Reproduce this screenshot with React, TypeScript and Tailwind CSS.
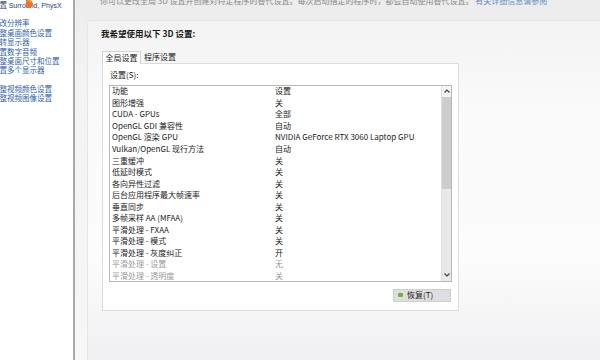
import React from 'react';

const sideLinks = [
  '更改分辨率',
  '调整桌面颜色设置',
  '旋转显示器',
  '设置数字音频',
  '调整桌面尺寸和位置',
  '设置多个显示器',
];

const videoLinks = ['调整视频颜色设置', '调整视频图像设置'];

const rows: { name: string; value: string; dim?: boolean }[] = [
  { name: '图形增强', value: '关' },
  { name: 'CUDA - GPUs', value: '全部' },
  { name: 'OpenGL GDI 兼容性', value: '自动' },
  { name: 'OpenGL 渲染 GPU', value: 'NVIDIA GeForce RTX 3060 Laptop GPU' },
  { name: 'Vulkan/OpenGL 现行方法', value: '自动' },
  { name: '三重缓冲', value: '关' },
  { name: '低延时模式', value: '关' },
  { name: '各向异性过滤', value: '关' },
  { name: '后台应用程序最大帧速率', value: '关' },
  { name: '垂直同步', value: '关' },
  { name: '多帧采样 AA (MFAA)', value: '关' },
  { name: '平滑处理 - FXAA', value: '关' },
  { name: '平滑处理 - 模式', value: '关' },
  { name: '平滑处理 - 灰度纠正', value: '开' },
  { name: '平滑处理 - 设置', value: '无', dim: true },
  { name: '平滑处理 - 透明度', value: '关', dim: true },
];

function Sidebar() {
  return (
    <div className="relative w-[75px] shrink-0 overflow-hidden bg-white border-r-2 border-[#a9a9ad]">
      <div className="ml-[-8px] text-[7.5px] leading-[9.4px] text-[#2f63a6] font-['Noto_Sans_CJK_SC',sans-serif] whitespace-nowrap">
        <div className="text-[#1f3f7a]">
          设置 <span className="font-['Liberation_Sans',sans-serif] text-[7px]">Surround, PhysX</span>
        </div>
        <div className="h-[8px]" />
        {sideLinks.map((l) => (
          <div key={l}>{l}</div>
        ))}
        <div className="h-[9px]" />
        {videoLinks.map((l) => (
          <div key={l}>{l}</div>
        ))}
      </div>
      {/* cursor over the first link */}
      <svg className="absolute left-[24px] top-[-1px]" width="10" height="10" viewBox="0 0 10 10">
        <path d="M2 1 C5 0 9 2 9 5 C9 8 6 9.5 4 9 C2 8.5 1 6 2 4 Z" fill="#e8741f" />
        <path d="M3 2 C5 1.5 7 3 7 4" stroke="#f6a45a" strokeWidth="1" fill="none" />
      </svg>
    </div>
  );
}

function Scrollbar() {
  return (
    <div className="flex w-[10px] shrink-0 flex-col bg-[#e9e9ec] border-l border-[#e0e0e0]">
      <div className="flex h-[11px] items-center justify-center bg-[#f4f4f6]">
        <svg width="6" height="4" viewBox="0 0 6 4">
          <path d="M0.5 3.5 L3 1 L5.5 3.5" stroke="#404040" strokeWidth="1.1" fill="none" />
        </svg>
      </div>
      <div className="h-[92px] bg-[#cdcdd0]" />
      <div className="flex-1" />
      <div className="flex h-[11px] items-center justify-center">
        <svg width="6" height="4" viewBox="0 0 6 4">
          <path d="M0.5 0.5 L3 3 L5.5 0.5" stroke="#404040" strokeWidth="1.1" fill="none" />
        </svg>
      </div>
    </div>
  );
}

function SettingsList() {
  return (
    <div className="mt-[5px] flex h-[197px] border border-[#b9b9bd] bg-white">
      <div className="flex-1 overflow-hidden text-[8px] text-[#1b1b1b]">
        <div className="flex h-[11.56px] items-center">
          <div className="w-[165px] shrink-0 pl-[2px]">功能</div>
          <div>设置</div>
        </div>
        {rows.map((r) => (
          <div
            key={r.name}
            className={`flex h-[11.56px] items-center whitespace-nowrap ${r.dim ? 'text-[#9b9b9b]' : ''}`}
          >
            <div className="w-[165px] shrink-0 pl-[2px]">{r.name}</div>
            <div>{r.value}</div>
          </div>
        ))}
      </div>
      <Scrollbar />
    </div>
  );
}

function TabPanel() {
  return (
    <div className="w-[357px]">
      <div className="flex items-end text-[8px] leading-[10px] text-[#1b1b1b]">
        <div className="relative z-10 mb-[-1px] border border-b-0 border-[#d4d4d8] bg-white px-[2.5px] pt-[0.5px] pb-[1px]">全局设置</div>
        <div className="px-[3px] pb-[1px]">程序设置</div>
      </div>
      <div className="border border-[#dcdce0] bg-white px-[6px] pt-[6px] pb-[8px]">
        <div className="pl-[1px] text-[8px] leading-[10px] text-[#1b1b1b]">设置(S):</div>
        <SettingsList />
        <div className="mt-[7px] flex justify-end pr-[1px]">
          <button className="flex h-[13px] w-[58px] items-center gap-[4px] border border-[#cfcfd2] bg-[#dedee0] pl-[4px] text-[8px] text-[#1b1b1b]">
            <span className="h-[4px] w-[5px] rounded-[1px] bg-[#6fb33a]" />
            <span>恢复(T)</span>
          </button>
        </div>
      </div>
    </div>
  );
}

export default function App() {
  return (
    <div className="flex h-[360px] w-[600px] overflow-hidden font-['Noto_Sans_CJK_SC','Noto_Sans',sans-serif]">
      <Sidebar />
      <div className="flex flex-1 flex-col bg-[linear-gradient(180deg,#ececed_0%,#f3f3f4_20%,#f7f7f8_100%)]">
        <div className="mt-[-4px] h-[24px] pl-[25px] whitespace-nowrap overflow-hidden text-[8px] leading-[10px] text-[#8a8a8a]">
          你可以更改全局 3D 设置并创建对特定程序的替代设置。每次启动指定的程序时，都会自动使用替代设置。 <span className="text-[#6d8fbf]">有关详细信息请参阅</span>
        </div>
        <div className="ml-[12px] flex-1 rounded-tl-[3px] border-l border-t border-[#e6e6e8] bg-[linear-gradient(180deg,#f3f3f4_0%,#fafafa_25%,#fcfcfc_70%,#f0f0f3_100%)] pl-[14px] pt-[6px]">
          <div className="ml-[-1px] text-[8.5px] leading-[12px] font-bold text-[#1b1b1b]">
            我希望使用以下 3D 设置:
          </div>
          <div className="mt-[12px]">
            <TabPanel />
          </div>
        </div>
      </div>
    </div>
  );
}
